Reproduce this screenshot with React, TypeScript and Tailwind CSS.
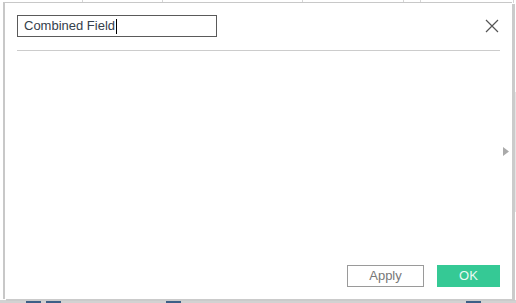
import React from "react";

const topCols = [83, 80, 140, 101, 17, 93];
const bottomBlocks = [
  { w: 26, blue: false },
  { w: 15, blue: true },
  { w: 5, blue: false },
  { w: 15, blue: true },
  { w: 105, blue: false },
  { w: 15, blue: true },
  { w: 285, blue: false },
  { w: 15, blue: true },
  { w: 35, blue: false },
];

export default function App() {
  return (
    <div
      className="relative w-[516px] h-[303px] bg-white overflow-hidden flex flex-col"
      style={{ fontFamily: '"Liberation Sans", Arial, sans-serif' }}
    >
      {/* background worksheet behind the dialog */}
      <div className="flex h-[3px]">
        {topCols.map((w, i) => (
          <div key={i} className="h-full border-r border-[#d6d6d6]" style={{ width: w }} />
        ))}
      </div>
      <div className="flex-1 flex justify-end items-center">
        <div className="w-px h-[120px] bg-[#e4e4e4]" />
      </div>
      <div className="flex h-[3px] bg-[#d2d2d2]">
        {bottomBlocks.map((b, i) => (
          <div key={i} className={b.blue ? "h-full bg-[#3c5f87]" : "h-full"} style={{ width: b.w }} />
        ))}
      </div>

      {/* dialog window */}
      <div className="absolute left-[3px] top-[2px] w-[509px] h-[297px] bg-white border-l-2 border-t border-[#c8c8c8] shadow-[3px_2px_0_#cbcbcb] flex flex-col p-[12px]">
        <div className="flex items-center justify-between">
          <div className="w-[200px] h-[22px] border border-[#5a5a5a] flex items-center pl-[6px] text-[13px] text-[#35404c]">
            <span>Combined Field</span>
            <span className="inline-block w-px h-[15px] bg-black ml-[1px]" />
          </div>
          <svg width="14" height="14" viewBox="0 0 14 14" className="mr-[1px]">
            <path d="M1 1 L13 13 M13 1 L1 13" stroke="#555" strokeWidth="1.2" fill="none" />
          </svg>
        </div>
        <div className="mt-[13px] h-px bg-[#cccccc]" />
        <div className="flex-1 flex justify-end items-center -mr-[9px] pb-[14px]">
          <svg width="6" height="9" viewBox="0 0 6 9">
            <path d="M0 0 L6 4.5 L0 9 Z" fill="#aaaaaa" />
          </svg>
        </div>
        <div className="flex justify-end gap-[13px]">
          <div className="w-[77px] h-[22px] border border-[#9a9a9a] flex items-center justify-center text-[13px] text-[#777]">
            Apply
          </div>
          <div className="w-[63px] h-[22px] bg-[#35c995] flex items-center justify-center text-[13px] text-[#eafaf3]">
            OK
          </div>
        </div>
      </div>
    </div>
  );
}
